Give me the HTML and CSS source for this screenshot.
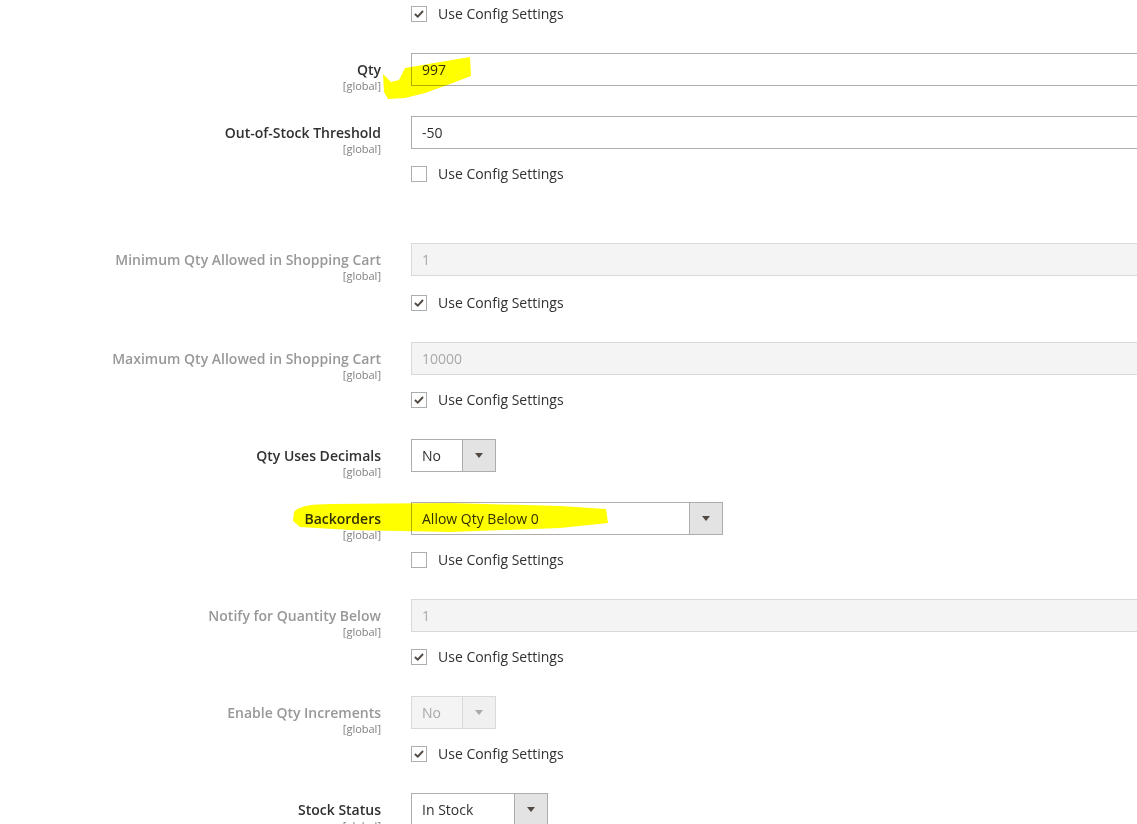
FILE: index.html
```html
<!DOCTYPE html>
<html>
<head>
<meta charset="utf-8">
<link rel="stylesheet" href="styles.css">
</head>
<body>
<div class="form">
  <div class="cb-row first">
    <span class="cb checked"><svg viewBox="0 0 16 16"><path d="M3.3 8 L6.6 11 L12.6 4.6" /></svg></span>
    <span class="cb-text">Use Config Settings</span>
  </div>

  <div class="field">
    <div class="label"><span class="name">Qty</span><span class="scope">[global]</span></div>
    <div class="control"><div class="input">997</div></div>
  </div>

  <div class="field extra">
    <div class="label"><span class="name">Out-of-Stock Threshold</span><span class="scope">[global]</span></div>
    <div class="control">
      <div class="input">-50</div>
      <div class="cb-row"><span class="cb"></span><span class="cb-text">Use Config Settings</span></div>
    </div>
  </div>

  <div class="field disabled">
    <div class="label"><span class="name">Minimum Qty Allowed in Shopping Cart</span><span class="scope">[global]</span></div>
    <div class="control">
      <div class="input">1</div>
      <div class="cb-row lower"><span class="cb checked"><svg viewBox="0 0 16 16"><path d="M3.3 8 L6.6 11 L12.6 4.6" /></svg></span><span class="cb-text">Use Config Settings</span></div>
    </div>
  </div>

  <div class="field disabled">
    <div class="label"><span class="name">Maximum Qty Allowed in Shopping Cart</span><span class="scope">[global]</span></div>
    <div class="control">
      <div class="input">10000</div>
      <div class="cb-row"><span class="cb checked"><svg viewBox="0 0 16 16"><path d="M3.3 8 L6.6 11 L12.6 4.6" /></svg></span><span class="cb-text">Use Config Settings</span></div>
    </div>
  </div>

  <div class="field">
    <div class="label"><span class="name">Qty Uses Decimals</span><span class="scope">[global]</span></div>
    <div class="control">
      <div class="select w85"><span class="sel-val">No</span><span class="sel-arrow"><i></i></span></div>
    </div>
  </div>

  <div class="field">
    <div class="label"><span class="name">Backorders</span><span class="scope">[global]</span></div>
    <div class="control">
      <div class="select w312"><span class="sel-val">Allow Qty Below 0</span><span class="sel-arrow"><i></i></span></div>
      <div class="cb-row"><span class="cb"></span><span class="cb-text">Use Config Settings</span></div>
    </div>
  </div>

  <div class="field disabled">
    <div class="label"><span class="name">Notify for Quantity Below</span><span class="scope">[global]</span></div>
    <div class="control">
      <div class="input">1</div>
      <div class="cb-row"><span class="cb checked"><svg viewBox="0 0 16 16"><path d="M3.3 8 L6.6 11 L12.6 4.6" /></svg></span><span class="cb-text">Use Config Settings</span></div>
    </div>
  </div>

  <div class="field disabled">
    <div class="label"><span class="name">Enable Qty Increments</span><span class="scope">[global]</span></div>
    <div class="control">
      <div class="select w85"><span class="sel-val">No</span><span class="sel-arrow"><i></i></span></div>
      <div class="cb-row"><span class="cb checked"><svg viewBox="0 0 16 16"><path d="M3.3 8 L6.6 11 L12.6 4.6" /></svg></span><span class="cb-text">Use Config Settings</span></div>
    </div>
  </div>

  <div class="field">
    <div class="label"><span class="name">Stock Status</span><span class="scope">[global]</span></div>
    <div class="control">
      <div class="select w137"><span class="sel-val">In Stock</span><span class="sel-arrow"><i></i></span></div>
    </div>
  </div>
</div>

<svg class="marker" width="1137" height="824" viewBox="0 0 1137 824">
  <path d="M383 74 L391 82 L399 80 L405 68 L440 62 L470 57 L471 76 L450 84 L425 93 L405 98 L388 99 L384 92 Z" />
  <path d="M294 512 Q300 504 330 504 L450 503 L560 506 L606 509 L608 523 L560 528 L450 532 L350 530 L300 527 L293 521 Z" />
</svg>
</body>
</html>
```
FILE: styles.css
```css
html, body {
  margin: 0;
  padding: 0;
  overflow: hidden;
  background: #ffffff;
}
body {
  font-family: "Open Sans", "Liberation Sans", sans-serif;
  font-size: 14px;
  color: #303030;
  width: 1137px;
  height: 824px;
  position: relative;
}
.form {
  padding-top: 4px;
}
.field {
  display: flex;
  align-items: flex-start;
  margin-bottom: 30px;
}
.field.extra {
  margin-bottom: 60px;
}
.label {
  box-sizing: border-box;
  width: 381px;
  height: 33px;
  flex: none;
  display: flex;
  flex-direction: column;
  align-items: flex-end;
  padding-top: 7px;
  text-align: right;
  white-space: nowrap;
}
.name {
  font-weight: 600;
  line-height: 19px;
}
.scope {
  font-size: 11px;
  line-height: 13px;
  color: #808080;
}
.control {
  margin-left: 30px;
  flex: 1;
  min-width: 0;
}
.input {
  box-sizing: border-box;
  width: 760px;
  height: 33px;
  border: 1px solid #adadad;
  padding: 0 10px;
  line-height: 31px;
  background: #fff;
}
.disabled .name {
  color: #989898;
}
.disabled .input {
  background: #f4f4f4;
  border-color: #d9d9d9;
  color: #a9a9a9;
}
.cb-row {
  display: flex;
  align-items: center;
  height: 19px;
  margin-top: 15px;
  margin-left: 411px;
}
.control .cb-row {
  margin-left: 0;
}
.control .cb-row.lower {
  margin-top: 17px;
}
.cb-row.first {
  margin-top: 0;
  margin-bottom: 30px;
}
.cb {
  box-sizing: border-box;
  width: 16px;
  height: 16px;
  border: 1px solid #adadad;
  background: #fff;
  display: flex;
  flex: none;
}
.cb svg {
  width: 14px;
  height: 14px;
}
.cb path {
  fill: none;
  stroke: #514943;
  stroke-width: 2.2;
}
.cb-text {
  margin-left: 11px;
  line-height: 19px;
}
.select {
  box-sizing: border-box;
  height: 33px;
  border: 1px solid #adadad;
  display: flex;
  background: #fff;
}
.w85 { width: 85px; }
.w312 { width: 312px; }
.w137 { width: 137px; }
.sel-val {
  flex: 1;
  padding-left: 10px;
  line-height: 31px;
}
.sel-arrow {
  width: 33px;
  flex: none;
  box-sizing: border-box;
  border-left: 1px solid #adadad;
  background: #e3e3e3;
  display: flex;
  align-items: center;
  justify-content: center;
}
.sel-arrow i {
  width: 0;
  height: 0;
  border-left: 4px solid transparent;
  border-right: 4px solid transparent;
  border-top: 5px solid #514943;
}
.disabled .select {
  background: #f4f4f4;
  border-color: #d9d9d9;
  color: #a9a9a9;
}
.disabled .sel-arrow {
  background: #f0f0f0;
  border-left-color: #d9d9d9;
}
.disabled .sel-arrow i {
  border-top-color: #a9a9a9;
}
.marker {
  position: absolute;
  left: 0;
  top: 0;
  pointer-events: none;
  mix-blend-mode: multiply;
}
.marker path {
  fill: #ffff00;
}
```
